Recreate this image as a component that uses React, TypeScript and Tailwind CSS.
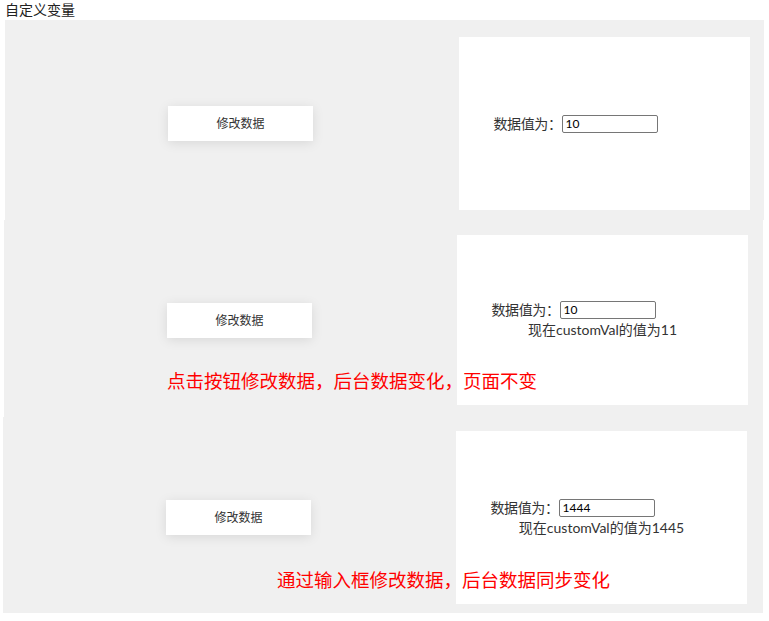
import { useState } from 'react'

const font = { fontFamily: 'Lato, "Noto Sans CJK SC", sans-serif' }

function ModifyButton({ onClick }: { onClick?: () => void }) {
  return (
    <button
      onClick={onClick}
      className="w-[145px] h-[35px] bg-white text-[12px] text-[#333] shadow-[0_2px_12px_rgba(0,0,0,0.1)] shrink-0"
    >
      修改数据
    </button>
  )
}

function ValueCard({
  value,
  onChange,
  note,
  tall = true,
}: {
  value: string
  onChange?: (v: string) => void
  note?: string
  tall?: boolean
}) {
  return (
    <div
      className={`w-[291px] ${tall ? 'h-[173px]' : 'h-[170px]'} bg-white flex flex-col items-center justify-center shrink-0 text-[14px] text-[#333]`}
    >
      <div className="flex items-center h-[20px] leading-[20px] mr-[58px]">
        <span className="tracking-[-0.4px]">数据值为：</span>
        <input
          value={value}
          onChange={(e) => onChange?.(e.target.value)}
          className="w-[96px] h-[18px] border border-[#767676] rounded-[2px] px-[3px] text-[12px] text-black outline-none"
        />
      </div>
      {note && <div className="leading-[20px]">{note}</div>}
    </div>
  )
}

export default function App() {
  const [a, setA] = useState('10')
  const [b] = useState('10')
  const [c, setC] = useState('1444')

  return (
    <div className="w-[769px] h-[621px] bg-white" style={font}>
      <div className="h-[20px] pl-[5px] text-[14px] leading-[20px] text-[#222]">自定义变量</div>

      {/* 1 */}
      <div className="ml-[5px] w-[759px] h-[200px] bg-[#f0f0f0] flex items-start">
        <div className="ml-[163px] mt-[86px]">
          <ModifyButton />
        </div>
        <div className="ml-[146px] mt-[17px]">
          <ValueCard value={a} onChange={setA} />
        </div>
      </div>

      {/* 2 */}
      <div className="relative ml-[4px] w-[759px] h-[197px] bg-[#f0f0f0] flex items-start">
        <div className="ml-[163px] mt-[83px]">
          <ModifyButton />
        </div>
        <div className="ml-[145px] mt-[15px]">
          <ValueCard value={b} note="现在customVal的值为11" tall={false} />
        </div>
        <div className="absolute left-[163px] top-[149px] text-[18.5px] leading-[24px] text-[#ff0000] whitespace-nowrap">
          点击按钮修改数据，后台数据变化，页面不变
        </div>
      </div>

      {/* 3 */}
      <div className="relative ml-[3px] w-[760px] h-[196px] bg-[#f0f0f0] flex items-start">
        <div className="ml-[163px] mt-[83px]">
          <ModifyButton />
        </div>
        <div className="ml-[145px] mt-[14px]">
          <ValueCard value={c} onChange={setC} note={`现在customVal的值为${Number(c) + 1}`} />
        </div>
        <div className="absolute left-[274px] top-[151px] text-[18.5px] leading-[24px] text-[#ff0000] whitespace-nowrap">
          通过输入框修改数据，后台数据同步变化
        </div>
      </div>
    </div>
  )
}
